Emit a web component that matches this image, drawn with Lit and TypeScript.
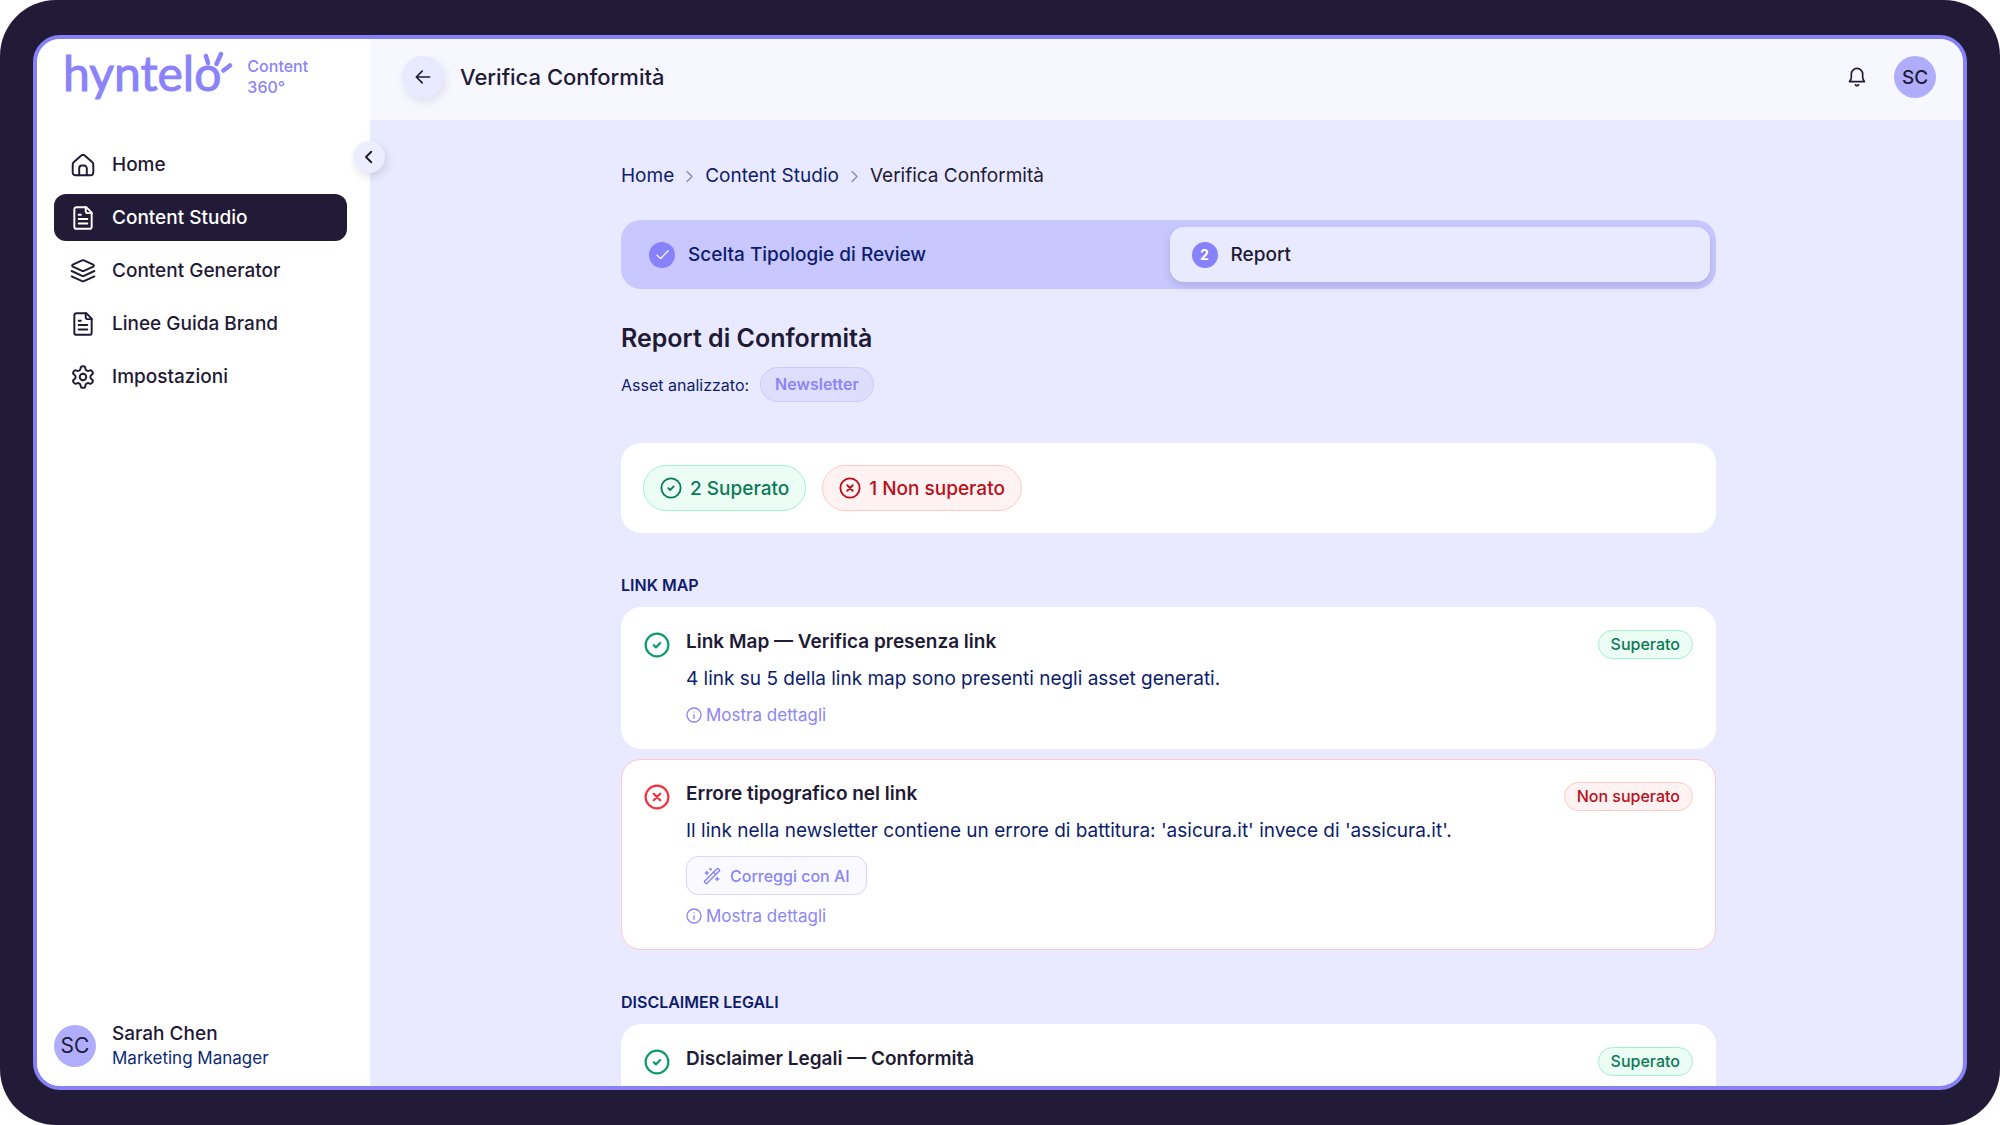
import { LitElement, html, css, svg, nothing, TemplateResult, SVGTemplateResult } from 'lit';
import { customElement, property, state } from 'lit/decorators.js';
import { classMap } from 'lit/directives/class-map.js';

type Outcome = 'passed' | 'failed';

interface Check {
  title: string;
  text: string;
  outcome: Outcome;
}

interface CheckGroup {
  name: string;
  checks: Check[];
}

const OUTCOME_LABEL: Record<Outcome, string> = {
  passed: 'Superato',
  failed: 'Non superato',
};

const GROUPS: CheckGroup[] = [
  {
    name: 'Link Map',
    checks: [
      {
        title: 'Link Map — Verifica presenza link',
        text: '4 link su 5 della link map sono presenti negli asset generati.',
        outcome: 'passed',
      },
      {
        title: 'Errore tipografico nel link',
        text: "Il link nella newsletter contiene un errore di battitura: 'asicura.it' invece di 'assicura.it'.",
        outcome: 'failed',
      },
    ],
  },
  {
    name: 'Disclaimer Legali',
    checks: [
      {
        title: 'Disclaimer Legali — Conformità',
        text: 'I disclaimer legali sono presenti e conformi alle linee.',
        outcome: 'passed',
      },
    ],
  },
];

const NAV = [
  { label: 'Home', icon: 'home' },
  { label: 'Content Studio', icon: 'file' },
  { label: 'Content Generator', icon: 'layers' },
  { label: 'Linee Guida Brand', icon: 'file' },
  { label: 'Impostazioni', icon: 'settings' },
];

const ICONS: Record<string, SVGTemplateResult> = {
  home: svg`
    <path d="M2.5 11.6c0-.9.4-1.7 1.1-2.3l6.6-5.9a2.8 2.8 0 0 1 3.6 0l6.6 5.9c.7.6 1.1 1.4 1.1 2.3V19a2.5 2.5 0 0 1-2.5 2.5H5A2.5 2.5 0 0 1 2.5 19z" />
    <path d="M8.5 21.5V15a2.5 2.5 0 0 1 2.5-2.5h2a2.5 2.5 0 0 1 2.5 2.5v6.5" />`,
  file: svg`
    <path d="M15 2H6a2 2 0 0 0-2 2v16a2 2 0 0 0 2 2h12a2 2 0 0 0 2-2V7Z" />
    <path d="M14.5 2v3.5a2 2 0 0 0 2 2H20" />
    <path d="M8 9h2M8 13h8M8 17h8" />`,
  layers: svg`
    <path d="m12.83 2.18a2 2 0 0 0-1.66 0L2.6 6.08a1 1 0 0 0 0 1.83l8.58 3.91a2 2 0 0 0 1.66 0l8.58-3.9a1 1 0 0 0 0-1.83Z" />
    <path d="m1.5 12 9.68 4.4a2 2 0 0 0 1.65 0L22.5 12" />
    <path d="m1.5 17 9.68 4.4a2 2 0 0 0 1.65 0L22.5 17" />`,
  settings: svg`
    <path d="M12.22 2h-.44a2 2 0 0 0-2 2v.18a2 2 0 0 1-1 1.73l-.43.25a2 2 0 0 1-2 0l-.15-.08a2 2 0 0 0-2.73.73l-.22.38a2 2 0 0 0 .73 2.73l.15.1a2 2 0 0 1 1 1.72v.51a2 2 0 0 1-1 1.74l-.15.09a2 2 0 0 0-.73 2.73l.22.38a2 2 0 0 0 2.73.73l.15-.08a2 2 0 0 1 2 0l.43.25a2 2 0 0 1 1 1.73V20a2 2 0 0 0 2 2h.44a2 2 0 0 0 2-2v-.18a2 2 0 0 1 1-1.73l.43-.25a2 2 0 0 1 2 0l.15.08a2 2 0 0 0 2.73-.73l.22-.39a2 2 0 0 0-.73-2.73l-.15-.08a2 2 0 0 1-1-1.74v-.5a2 2 0 0 1 1-1.74l.15-.09a2 2 0 0 0 .73-2.73l-.22-.38a2 2 0 0 0-2.73-.73l-.15.08a2 2 0 0 1-2 0l-.43-.25a2 2 0 0 1-1-1.73V4a2 2 0 0 0-2-2z" />
    <circle cx="12" cy="12" r="3" />`,
  bell: svg`
    <path d="M3 17.5h18c-1.3-1.4-2.2-3-2.2-5.4V8.5a6.8 6.8 0 0 0-13.6 0v3.6c0 2.4-.9 4-2.2 5.4z" />
    <path d="M10 21.4c.5.7 1.2 1 2 1s1.500-.3 2-1" />`,
  back: svg`<path d="m11 5-7 7 7 7M4 12h16" />`,
  left: svg`<path d="m15 5-7 7 7 7" />`,
  right: svg`<path d="m8 4 8 8-8 8" />`,
  check: svg`<path d="m3 13 6 5.5L21 6" />`,
  passed: svg`<circle cx="12" cy="12" r="10.5" /><path d="m9 12.2 2 2 4-4" />`,
  failed: svg`<circle cx="12" cy="12" r="10.5" /><path d="m15 9-6 6M9 9l6 6" />`,
  info: svg`<circle cx="12" cy="12" r="10.5" /><path d="M12 17v-5.500M12 7.500v.01" />`,
  wand: svg`
    <path d="m21.64 3.64-1.28-1.28a1.21 1.21 0 0 0-1.72 0L2.36 18.64a1.21 1.21 0 0 0 0 1.72l1.28 1.28a1.2 1.2 0 0 0 1.72 0L21.64 5.36a1.2 1.2 0 0 0 0-1.72" />
    <path d="m14 7 3 3M5 6v4M19 14v4M10 2v2M7 8H3M21 16h-4M11 3H9" />`,
};

@customElement('ui-icon')
export class UiIcon extends LitElement {
  static styles = css`
    :host {
      display: inline-flex;
      flex: none;
      width: 26px;
      height: 26px;
    }

    svg {
      width: 100%;
      height: 100%;
      overflow: visible;
      fill: none;
      stroke: currentColor;
      stroke-linecap: round;
      stroke-linejoin: round;
    }
  `;

  @property() name = '';
  @property({ type: Number }) weight = 2;

  render(): TemplateResult {
    return html`
      <svg viewBox="0 0 24 24" stroke-width=${this.weight} aria-hidden="true">
        ${ICONS[this.name]}
      </svg>
    `;
  }
}

@customElement('check-card')
export class CheckCard extends LitElement {
  static styles = css`
    :host {
      display: block;
    }

    .card {
      display: flex;
      align-items: flex-start;
      gap: 16px;
      padding: 22px;
      background: #fff;
      border: 1px solid #fff;
      border-radius: 20px;
    }

    .card.failed {
      border-color: #ffc9cd;
    }

    .status {
      margin-top: 2px;
      color: #0c9a68;
    }

    .failed .status {
      color: #f5303c;
    }

    .body {
      flex: 1;
      display: flex;
      flex-direction: column;
      align-items: flex-start;
      gap: 10px;
    }

    h3 {
      margin: 0;
      font-size: 19px;
      font-weight: 600;
      line-height: 24px;
      color: #1f1a35;
    }

    p {
      margin: 0;
      line-height: 30px;
      color: #0d1d6b;
    }

    button {
      display: inline-flex;
      align-items: center;
      padding: 0;
      border: 0;
      background: none;
      font: inherit;
      font-size: 17px;
      line-height: 22px;
      color: #8c85f5;
      cursor: pointer;
    }

    .details {
      gap: 4px;
    }

    .details ui-icon {
      width: 16px;
      height: 16px;
    }

    .fix {
      gap: 9px;
      height: 39px;
      padding: 0 16px;
      border: 1px solid #d9d6f8;
      border-radius: 12px;
      background: #f9f9ff;
      font-size: 16px;
      font-weight: 500;
    }

    .fix ui-icon {
      width: 18px;
      height: 18px;
    }

    .badge {
      padding: 0 12px;
      border: 1px solid #a4f0cd;
      border-radius: 15px;
      background: #ecfdf5;
      font-size: 16px;
      font-weight: 500;
      line-height: 27px;
      color: #0b7a55;
    }

    .failed .badge {
      border-color: #ffc9c9;
      background: #fef2f2;
      color: #b9101a;
    }
  `;

  @property({ attribute: false }) check!: Check;

  render(): TemplateResult {
    const { title, text, outcome } = this.check;
    return html`
      <article class=${classMap({ card: true, failed: outcome === 'failed' })}>
        <ui-icon class="status" name=${outcome}></ui-icon>
        <div class="body">
          <h3>${title}</h3>
          <p>${text}</p>
          ${outcome === 'failed'
            ? html`<button class="fix" type="button">
                <ui-icon name="wand"></ui-icon>Correggi con AI
              </button>`
            : nothing}
          <button class="details" type="button">
            <ui-icon name="info"></ui-icon>Mostra dettagli
          </button>
        </div>
        <span class="badge">${OUTCOME_LABEL[outcome]}</span>
      </article>
    `;
  }
}

@customElement('app-sidebar')
export class AppSidebar extends LitElement {
  static styles = css`
    :host {
      position: relative;
      z-index: 1;
      display: flex;
      flex-direction: column;
      box-sizing: border-box;
      padding: 0 23px 16px 17px;
      background: #fff;
    }

    a {
      color: inherit;
      text-decoration: none;
    }

    .brand {
      display: flex;
      align-items: center;
      gap: 26px;
      height: 76px;
      padding-left: 9px;
      color: #8c83fa;
    }

    .logo {
      position: relative;
      padding-bottom: 8px;
      font-family: Lato, sans-serif;
      font-size: 48px;
      line-height: 64px;
      -webkit-text-stroke: 1px currentColor;
    }

    .rays {
      position: absolute;
      top: 9px;
      right: -12px;
      width: 32px;
      height: 24px;
      fill: none;
      stroke: currentColor;
      stroke-width: 4.5;
      stroke-linecap: round;
    }

    .product {
      font-size: 16px;
      font-weight: 500;
      line-height: 21px;
    }

    nav {
      display: flex;
      flex-direction: column;
      gap: 6px;
      margin-top: 26px;
    }

    .item {
      display: flex;
      align-items: center;
      gap: 16px;
      height: 47px;
      padding: 0 16px;
      border-radius: 12px;
      font-weight: 500;
      color: #1f1a35;
    }

    .item.active {
      background: #211b38;
      color: #fff;
    }

    .user {
      display: flex;
      align-items: center;
      gap: 16px;
      margin-top: auto;
    }

    .avatar {
      flex: none;
      width: 42px;
      border-radius: 50%;
      background: #b0adfd;
      font-size: 21px;
      line-height: 42px;
      text-align: center;
      color: #211b38;
    }

    .name {
      font-weight: 500;
      line-height: 24px;
      color: #1f1a35;
    }

    .role {
      font-size: 17px;
      line-height: 24px;
      color: #0d2a75;
    }

    .collapse {
      position: absolute;
      top: 102px;
      right: -15px;
      display: grid;
      place-items: center;
      width: 32px;
      height: 32px;
      padding: 0;
      border: 0;
      border-radius: 50%;
      background: #ededff;
      box-shadow: 2px 4px 8px rgb(33 27 56 / 12%);
      color: #1f1a35;
      cursor: pointer;
    }

    .collapse ui-icon {
      width: 18px;
      height: 18px;
    }
  `;

  @state() active = 'Content Studio';

  render(): TemplateResult {
    return html`
      <div class="brand">
        <span class="logo">
          hyntelo
          <svg class="rays" viewBox="0 0 32 24" aria-hidden="true">
            <path d="M5 6 7 13M20 4l-4.500 10M29 15.500l-6.500 5" />
          </svg>
        </span>
        <span class="product">Content<br />360°</span>
      </div>
      <nav>
        ${NAV.map(
          ({ label, icon }) => html`
            <a
              href="#"
              class=${classMap({ item: true, active: label === this.active })}
              @click=${() => (this.active = label)}
            >
              <ui-icon name=${icon} weight="1.8"></ui-icon>${label}
            </a>
          `
        )}
      </nav>
      <div class="user">
        <span class="avatar">SC</span>
        <div>
          <div class="name">Sarah Chen</div>
          <div class="role">Marketing Manager</div>
        </div>
      </div>
      <button class="collapse" type="button" aria-label="Comprimi menu">
        <ui-icon name="left" weight="2.5"></ui-icon>
      </button>
    `;
  }
}

@customElement('app-root')
export class AppRoot extends LitElement {
  static styles = css`
    :host {
      display: flex;
      box-sizing: border-box;
      height: 100vh;
      padding: 35px 33px;
      border-radius: 56px;
      background: #211b38;
      font-family: Inter, sans-serif;
      font-size: 19px;
      color: #1f1a35;
    }

    .window {
      flex: 1;
      display: grid;
      grid-template-columns: 333px 1fr;
      border: 4px solid #8781f5;
      border-radius: 27px;
      overflow: hidden;
      background: #e9e9ff;
    }

    .page {
      display: flex;
      flex-direction: column;
      min-height: 0;
    }

    header {
      flex: none;
      display: flex;
      align-items: center;
      gap: 16px;
      padding: 17px 27px 22px 32px;
      background: #f7f7ff;
    }

    header h1 {
      flex: 1;
      margin: 0;
      font-size: 22px;
      font-weight: 500;
      line-height: 28px;
    }

    .round {
      display: grid;
      place-items: center;
      width: 42px;
      height: 42px;
      padding: 0;
      border: 0;
      border-radius: 50%;
      background: none;
      font: inherit;
      font-weight: 500;
      color: inherit;
      cursor: pointer;
    }

    .round ui-icon {
      width: 20px;
      height: 20px;
    }

    .back {
      background: #e9e9ff;
      box-shadow: 2px 4px 8px rgb(33 27 56 / 10%);
    }

    .account {
      background: #b0adfd;
    }

    main {
      flex: 1;
      min-height: 0;
      padding: 43px 32px 0 36px;
      overflow: hidden;
    }

    .content {
      max-width: 1095px;
      margin: 0 auto;
    }

    .crumbs {
      display: flex;
      align-items: center;
      gap: 8px;
      line-height: 26px;
      color: #0d1d6b;
    }

    .crumbs a {
      color: inherit;
      text-decoration: none;
    }

    .crumbs ui-icon {
      width: 15px;
      height: 15px;
      color: #8388bb;
    }

    .crumbs .current {
      color: #1f1a35;
    }

    .steps {
      display: grid;
      grid-template-columns: 1fr 1fr;
      gap: 2px;
      margin: 31px 0 34px;
      padding: 7px 6px;
      border-radius: 20px;
      background: #c8c7ff;
      list-style: none;
    }

    .step {
      display: flex;
      align-items: center;
      gap: 13px;
      height: 55px;
      padding: 0 22px;
      border-radius: 14px;
      font-weight: 500;
      color: #0d1d6b;
    }

    .step.active {
      background: #e9e9ff;
      box-shadow: 0 4px 8px rgb(33 27 56 / 14%);
      color: #1f1a35;
    }

    .marker {
      display: grid;
      place-items: center;
      width: 26px;
      height: 26px;
      border-radius: 50%;
      background: #8781fb;
      font-size: 14px;
      font-weight: 700;
      color: #fff;
    }

    .marker ui-icon {
      width: 15px;
      height: 15px;
    }

    .title {
      margin: 0 0 14px;
      font-size: 25px;
      font-weight: 600;
      line-height: 30px;
    }

    .asset {
      display: flex;
      align-items: center;
      gap: 11px;
      font-size: 16px;
      color: #0d1d6b;
    }

    .tag {
      padding: 0 14px;
      border: 1px solid #cdcafb;
      border-radius: 18px;
      background: #dfddfc;
      font-weight: 600;
      line-height: 33px;
      color: #8c85f5;
    }

    .summary {
      display: flex;
      gap: 16px;
      margin-top: 41px;
      padding: 22px;
      border-radius: 20px;
      background: #fff;
    }

    .count {
      display: flex;
      align-items: center;
      gap: 8px;
      height: 44px;
      padding: 0 16px;
      border: 1px solid #a4f0cd;
      border-radius: 23px;
      background: #ecfdf5;
      font-weight: 500;
      color: #0b7a55;
    }

    .count.failed {
      border-color: #ffc9c9;
      background: #fef2f2;
      color: #b9101a;
    }

    .count ui-icon {
      width: 22px;
      height: 22px;
    }

    section {
      display: flex;
      flex-direction: column;
      gap: 10px;
      margin-top: 40px;
    }

    .group {
      margin: 0;
      font-size: 16px;
      font-weight: 600;
      line-height: 24px;
      text-transform: uppercase;
      color: #0d1d6b;
    }
  `;

  private count(outcome: Outcome): number {
    return GROUPS.flatMap(({ checks }) => checks).filter(
      check => check.outcome === outcome
    ).length;
  }

  private renderCount(outcome: Outcome): TemplateResult {
    return html`
      <span class="count ${outcome}">
        <ui-icon name=${outcome}></ui-icon>
        ${this.count(outcome)} ${OUTCOME_LABEL[outcome]}
      </span>
    `;
  }

  render(): TemplateResult {
    return html`
      <div class="window">
        <app-sidebar></app-sidebar>
        <div class="page">
          <header>
            <button class="round back" type="button" aria-label="Indietro">
              <ui-icon name="back"></ui-icon>
            </button>
            <h1>Verifica Conformità</h1>
            <button class="round" type="button" aria-label="Notifiche">
              <ui-icon name="bell"></ui-icon>
            </button>
            <button class="round account" type="button">SC</button>
          </header>
          <main>
            <div class="content">
              <nav class="crumbs">
                <a href="#">Home</a>
                <ui-icon name="right"></ui-icon>
                <a href="#">Content Studio</a>
                <ui-icon name="right"></ui-icon>
                <span class="current">Verifica Conformità</span>
              </nav>
              <ol class="steps">
                <li class="step">
                  <span class="marker"><ui-icon name="check"></ui-icon></span>
                  Scelta Tipologie di Review
                </li>
                <li class="step active">
                  <span class="marker">2</span>
                  Report
                </li>
              </ol>
              <h2 class="title">Report di Conformità</h2>
              <div class="asset">
                Asset analizzato: <span class="tag">Newsletter</span>
              </div>
              <div class="summary">
                ${this.renderCount('passed')} ${this.renderCount('failed')}
              </div>
              ${GROUPS.map(
                ({ name, checks }) => html`
                  <section>
                    <h2 class="group">${name}</h2>
                    ${checks.map(
                      check => html`<check-card .check=${check}></check-card>`
                    )}
                  </section>
                `
              )}
            </div>
          </main>
        </div>
      </div>
    `;
  }
}

declare global {
  interface HTMLElementTagNameMap {
    'ui-icon': UiIcon;
    'check-card': CheckCard;
    'app-sidebar': AppSidebar;
    'app-root': AppRoot;
  }
}
